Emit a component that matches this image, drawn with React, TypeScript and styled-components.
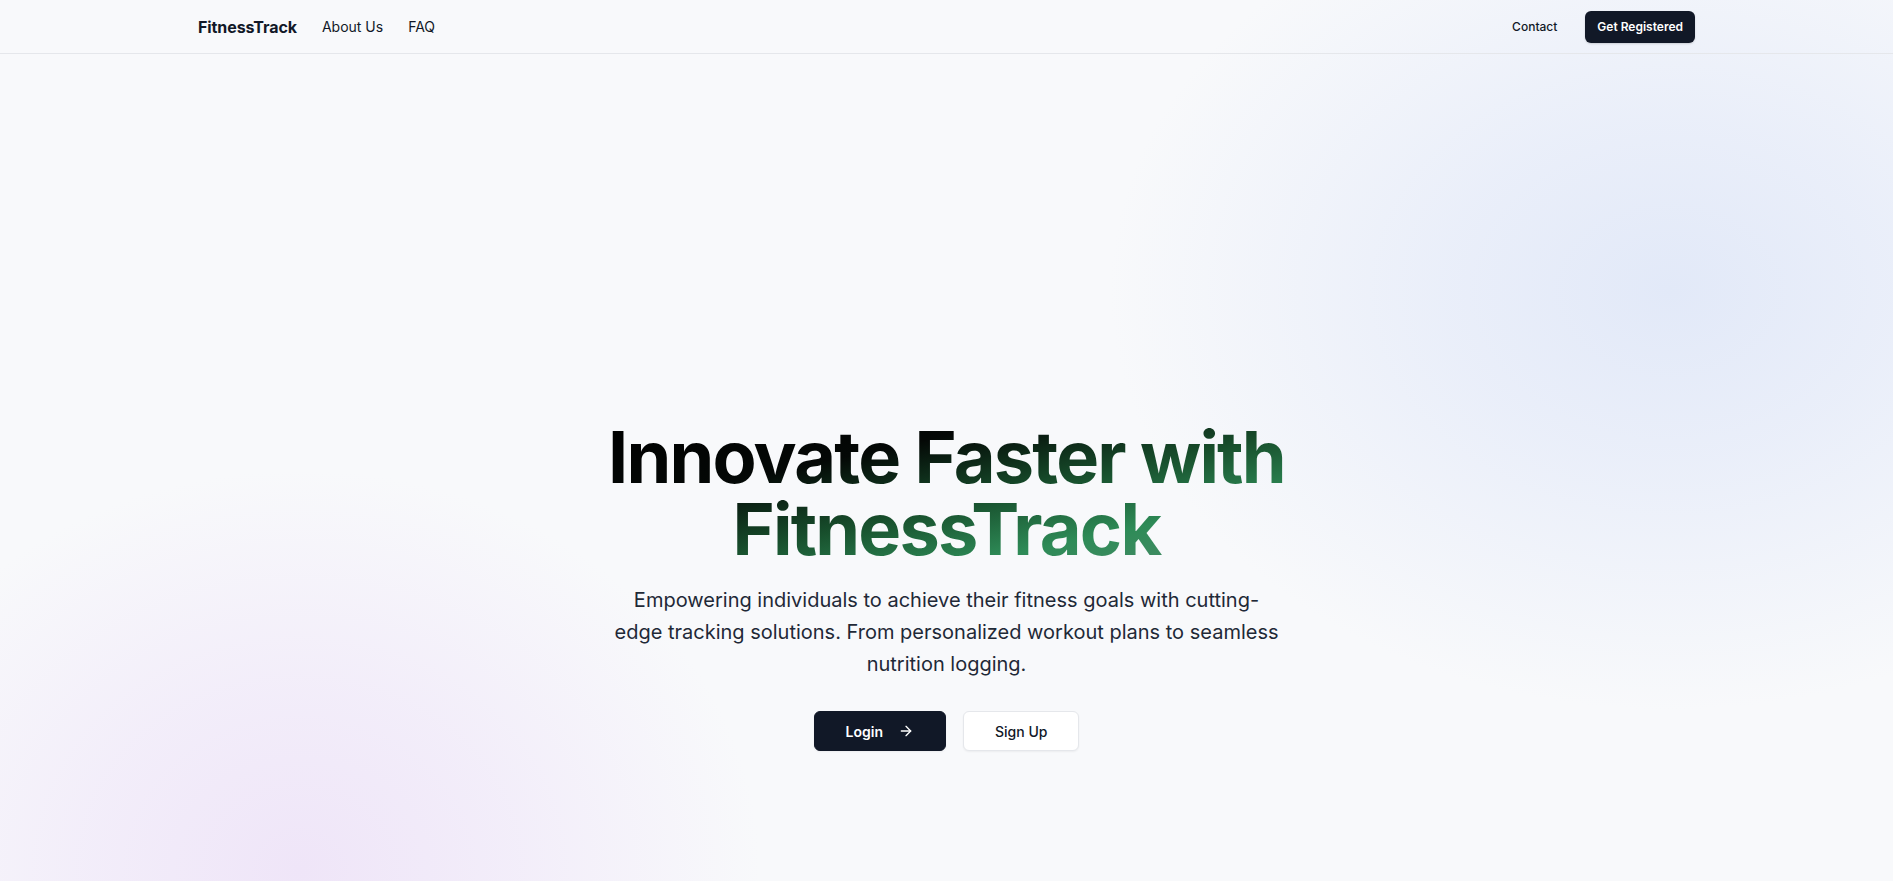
import React from "react";
import styled, { createGlobalStyle } from "styled-components";
import { ArrowRight } from "lucide-react";

const Global = createGlobalStyle`
  html, body { margin: 0; padding: 0; }
  body {
    font-family: Inter, "Noto Sans", "Liberation Sans", sans-serif;
    background: #f8f9fb;
    color: #111827;
    -webkit-font-smoothing: antialiased;
  }
  * { box-sizing: border-box; }
`;

const Page = styled.div`
  min-height: 881px;
  background:
    radial-gradient(ellipse 560px 420px at 1670px 290px, rgba(226, 233, 248, 1) 0%, rgba(229, 235, 249, 0.75) 40%, rgba(248, 249, 251, 0) 100%),
    radial-gradient(ellipse 460px 400px at 300px 870px, rgba(239, 229, 248, 1) 0%, rgba(240, 232, 249, 0.7) 45%, rgba(248, 249, 251, 0) 100%),
    #f8f9fb;
`;

const Header = styled.header`
  height: 54px;
  border-bottom: 1px solid #e5e7eb;
`;

const HeaderInner = styled.div`
  max-width: 1497px;
  height: 100%;
  margin: 0 auto;
  display: flex;
  align-items: center;
  justify-content: space-between;
`;

const NavGroup = styled.nav<{ $gap: number }>`
  display: flex;
  align-items: center;
  gap: ${(p) => p.$gap}px;
`;

const Logo = styled.a`
  font-size: 16px;
  font-weight: 700;
  color: #111827;
  text-decoration: none;
  letter-spacing: -0.005em;
`;

const NavLink = styled.a`
  font-size: 14px;
  font-weight: 400;
  color: #111827;
  text-decoration: none;
`;

const SmallButton = styled.button<{ $dark?: boolean }>`
  height: 32px;
  padding: 0 12px;
  border-radius: 6px;
  border: none;
  font-family: inherit;
  font-size: 12px;
  font-weight: ${(p) => (p.$dark ? 600 : 500)};
  color: ${(p) => (p.$dark ? "#ffffff" : "#111827")};
  background: ${(p) => (p.$dark ? "#111827" : "transparent")};
  box-shadow: ${(p) => (p.$dark ? "0 1px 2px rgba(0,0,0,0.15)" : "none")};
  cursor: pointer;
`;

const Hero = styled.main`
  display: flex;
  flex-direction: column;
  align-items: center;
  padding-top: 367px;
  padding-bottom: 120px;
`;

const Title = styled.h1`
  margin: 0;
  width: fit-content;
  font-size: 72px;
  line-height: 1;
  font-weight: 700;
  letter-spacing: -0.025em;
  text-align: center;
  background: linear-gradient(to bottom right, #000000 0%, #040806 30%, #18502d 55%, #2e8b57 76%, #4e8b6b 100%);
  -webkit-background-clip: text;
  background-clip: text;
  color: transparent;
`;

const Subtitle = styled.p`
  margin: 19px 0 0;
  max-width: 672px;
  font-size: 20px;
  line-height: 32px;
  color: #1f2937;
  text-align: center;
`;

const Actions = styled.div`
  margin-top: 31px;
  display: flex;
  gap: 17px;
`;

const CtaButton = styled.button<{ $primary?: boolean }>`
  height: 40px;
  padding: 0 31px;
  display: inline-flex;
  align-items: center;
  gap: 15px;
  border-radius: 6px;
  font-family: inherit;
  font-size: 14px;
  font-weight: ${(p) => (p.$primary ? 600 : 500)};
  color: ${(p) => (p.$primary ? "#ffffff" : "#111827")};
  background: ${(p) => (p.$primary ? "#111827" : "#ffffff")};
  border: 1px solid ${(p) => (p.$primary ? "#111827" : "#e5e7eb")};
  box-shadow: 0 1px 2px rgba(0, 0, 0, 0.05);
  cursor: pointer;
`;

export default function App() {
  return (
    <Page>
      <Global />
      <Header>
        <HeaderInner>
          <NavGroup $gap={25}>
            <Logo href="#">FitnessTrack</Logo>
            <NavLink href="#">About Us</NavLink>
            <NavLink href="#">FAQ</NavLink>
          </NavGroup>
          <NavGroup $gap={16}>
            <SmallButton>Contact</SmallButton>
            <SmallButton $dark>Get Registered</SmallButton>
          </NavGroup>
        </HeaderInner>
      </Header>
      <Hero>
        <Title>
          Innovate Faster with
          <br />
          FitnessTrack
        </Title>
        <Subtitle>
          Empowering individuals to achieve their fitness goals with cutting-edge tracking
          solutions. From personalized workout plans to seamless nutrition logging.
        </Subtitle>
        <Actions>
          <CtaButton $primary>
            Login
            <ArrowRight size={16} strokeWidth={2} />
          </CtaButton>
          <CtaButton>Sign Up</CtaButton>
        </Actions>
      </Hero>
    </Page>
  );
}
